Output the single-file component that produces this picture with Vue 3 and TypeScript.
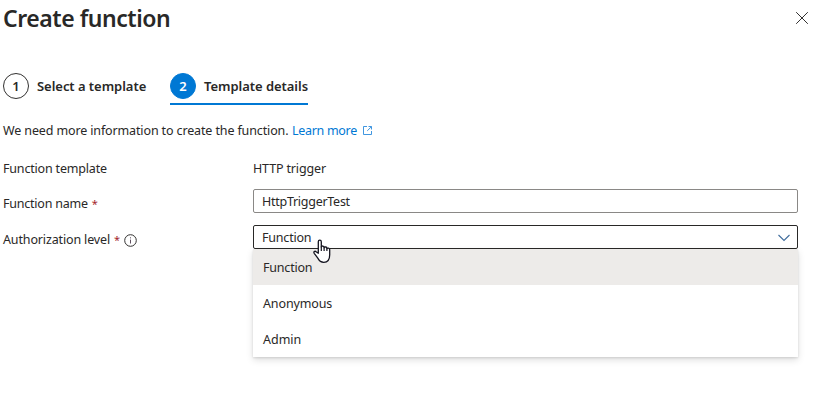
<script setup lang="ts">
import { ref } from 'vue'

const functionName = ref<string>('HttpTriggerTest')
const selected = ref<string>('Function')
const levels: { label: string; cls: string }[] = [
  { label: 'Function', cls: 'function' },
  { label: 'Anonymous', cls: 'anonymous' },
  { label: 'Admin', cls: 'admin' },
]
</script>

<template>
  <main class="panel">
    <header class="header">
      <h1 class="title">Create function</h1>
      <button class="close" type="button" aria-label="Close">
        <svg width="14" height="14" viewBox="0 0 14 14"><path d="M1.2 1.2 12.8 12.8M12.8 1.2 1.2 12.8" fill="none" stroke="#323130" stroke-width="1" /></svg>
      </button>
    </header>

    <nav class="steps">
      <div class="step">
        <span class="badge">1</span><span class="step-label first">Select a template</span>
      </div>
      <div class="step active">
        <span class="badge">2</span><span class="step-label second">Template details</span>
      </div>
    </nav>

    <p class="intro">
      <span class="message">We need more information to create the function.</span>
      <a class="link">Learn more</a>
      <svg class="external" width="10" height="10" viewBox="0 0 10 10"><path d="M4 .5H.5v8h8V5M5.500.5h3v3M8.300.8 4.200 4.900" fill="none" stroke="#2b8bdc" stroke-width=".9" /></svg>
    </p>

    <section class="form">
      <div class="row template-row">
        <span class="label"><span class="l-template">Function template</span></span>
        <span class="value">HTTP trigger</span>
      </div>
      <div class="row name-row">
        <span class="label"><span class="l-name">Function name</span><span class="required">*</span></span>
        <div class="field"><span class="name-value">{{ functionName }}</span></div>
      </div>
      <div class="row">
        <span class="label level-label">
          <span class="l-level">Authorization level</span><span class="required">*</span>
          <svg class="info" width="13" height="13" viewBox="0 0 13 13"><circle cx="6.5" cy="6.5" r="5.8" fill="none" stroke="#323130" /><path d="M6.5 5.6V9.5M6.5 3.3V4.4" stroke="#605060" /></svg>
        </span>
        <div class="select">
          <div class="field open">
            <span class="function">{{ selected }}</span>
            <svg class="chevron" width="12" height="8" viewBox="0 0 12 8"><path d="M.5 1 6 6.5 11.5 1" fill="none" stroke="#3f6c9c" stroke-width="1.1" /></svg>
          </div>
          <ul class="menu">
            <li v-for="level in levels" :key="level.label" class="option" :class="{ selected: level.label === selected }">
              <span :class="level.cls">{{ level.label }}</span>
            </li>
          </ul>
          <svg class="cursor" width="19" height="25" viewBox="0 0 19 25">
            <path d="M5.3 14.2V2.7C5.3.6 8.3.6 8.3 2.7V8c.2-1.4 2.8-1.3 2.8.4v.4c.4-1.3 2.8-1 2.8.5v.5c.5-1.2 2.8-.8 2.8.8v5.2c0 4.9-2.3 7.5-5.9 7.5-3.2 0-4.600-1.500-6-4.200L1.200 14.300c-.9-1.600.6-2.700 1.900-1.600z" fill="#fff" stroke="#14141f" stroke-width="1.3" stroke-linejoin="round" />
            <path d="M8.300 7.500V12M11.100 8.500V12M13.900 9.500V12" fill="none" stroke="#14141f" stroke-width="1.2" />
          </svg>
        </div>
      </div>
    </section>
  </main>
</template>

<style>
body { background: #fff; }
</style>

<style scoped>
.panel {
  box-sizing: border-box;
  width: 816px;
  height: 408px;
  overflow: hidden;
  padding-left: 3px;
  background: #fff;
  color: #292827;
  font: 12.5px/18px "Noto Sans", "Open Sans", sans-serif;
  white-space: nowrap;
}
.header { display: flex; justify-content: space-between; height: 73px; padding-right: 7px; }
.title { margin: 2px 0 0; font-size: 23px; line-height: 32px; font-weight: 600; letter-spacing: -0.45px; height: 32px; }
.close { display: flex; width: 14px; height: 14px; margin-top: 11px; padding: 0; border: 0; background: none; }
.steps { display: flex; gap: 24px; height: 32px; }
.step { display: flex; box-sizing: border-box; height: 32px; font-weight: 600; font-size: 13px; line-height: 26px; }
.step.active { border-bottom: 2px solid #0078d4; }
.badge { box-sizing: border-box; width: 26px; height: 26px; margin-right: 8px; border: 1px solid #323130; border-radius: 50%; text-align: center; line-height: 24px; }
.active .badge { border-color: #0078d4; background: #0078d4; color: #fff; }
.step-label { display: block; letter-spacing: -0.04px; }
.first { width: 109px; }
.second { width: 104px; }
.intro { display: flex; align-items: center; height: 18px; margin: 17px 0 0; }
.message { width: 289px; letter-spacing: -0.13px; }
.link { width: 71px; color: #0078d4; letter-spacing: -0.3px; }
.form { padding-top: 20px; }
.row { display: flex; height: 24px; }
.template-row { height: 29px; line-height: 18px; }
.name-row { height: 36px; }
.label { display: flex; width: 250px; }
.name-row .label, .level-label { padding-top: 6px; }
.l-template { letter-spacing: -0.18px; }
.l-name { letter-spacing: -0.22px; }
.l-level { letter-spacing: -0.14px; }
.value { letter-spacing: -0.15px; }
.name-value { letter-spacing: -0.27px; }
.function { letter-spacing: -0.2px; }
.anonymous { letter-spacing: -0.13px; }
.required { width: 5px; margin-left: 4px; color: #a4262c; font-size: 11px; }
.info { margin: 3px 0 0 5px; }
.select { position: relative; }
.field { display: flex; align-items: center; justify-content: space-between; box-sizing: border-box; width: 545px; height: 24px; padding: 0 7px 0 8px; border: 1px solid #8a8886; border-radius: 2px; background: #fff; }
.field > span { padding-top: 2px; }
.field.open { border-color: #292827; }
.chevron { margin-top: 2px; }
.menu { position: absolute; top: 24px; left: 0; width: 545px; margin: 0; padding: 0; list-style: none; background: #fff; box-shadow: 0 3px 7px rgba(0, 0, 0, .13), 0 1px 2px rgba(0, 0, 0, .11); }
.option { box-sizing: border-box; height: 36px; padding: 1px 0 0 10px; line-height: 36px; }
.option.selected { background: #edebe9; }
.cursor { position: absolute; top: 14px; left: 60px; }
</style>
